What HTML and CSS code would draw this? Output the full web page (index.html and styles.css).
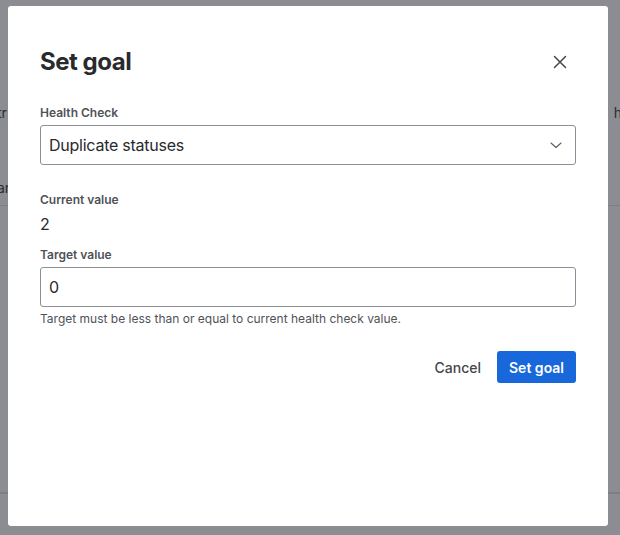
FILE: index.html
```html
<!DOCTYPE html>
<html lang="en">
<head>
<meta charset="utf-8">
<title>Set goal</title>
<link rel="stylesheet" href="styles.css">
</head>
<body>
<div class="bg-page">
  <div class="bg-row bg-row-first">
    <span class="bg-text bg-left">tr</span>
    <span class="bg-text bg-right">h</span>
  </div>
  <div class="bg-row bg-row-head">
    <span class="bg-text bg-left">ar</span>
  </div>
  <div class="bg-body"></div>
</div>
<div class="overlay">
  <section class="modal" role="dialog" aria-labelledby="modal-title">
    <header class="modal-header">
      <h1 id="modal-title" class="modal-title">Set goal</h1>
      <button class="close-btn" aria-label="Close">
        <svg width="14" height="14" viewBox="0 0 14 14" aria-hidden="true">
          <path d="M1.5 1.5 L12.5 12.5 M12.5 1.5 L1.5 12.5" stroke="#44464c" stroke-width="1.5" stroke-linecap="round" fill="none"/>
        </svg>
      </button>
    </header>
    <div class="field field-first">
      <label class="field-label">Health Check</label>
      <div class="select">
        <span class="select-value">Duplicate statuses</span>
        <svg class="chevron" width="12" height="8" viewBox="0 0 12 8" aria-hidden="true">
          <path d="M1 2 L6 6.5 L11 2" stroke="#5b5e66" stroke-width="1.1" fill="none" stroke-linecap="round" stroke-linejoin="round"/>
        </svg>
      </div>
    </div>
    <div class="field field-current">
      <span class="field-label">Current value</span>
      <span class="current-value">2</span>
    </div>
    <div class="field field-target">
      <label class="field-label">Target value</label>
      <div class="input"><span class="input-value">0</span></div>
      <span class="helper">Target must be less than or equal to current health check value.</span>
    </div>
    <footer class="modal-footer">
      <button class="btn btn-subtle">Cancel</button>
      <button class="btn btn-primary">Set goal</button>
    </footer>
  </section>
</div>
</body>
</html>
```
FILE: styles.css
```css
* { box-sizing: border-box; }
html, body {
  margin: 0;
  padding: 0;
  width: 620px;
  height: 535px;
  overflow: hidden;
}
body {
  font-family: "Inter", "Liberation Sans", sans-serif;
  color: #292a2e;
  background: #8b8d92;
}

/* background page, dimmed by the overlay */
.bg-page {
  display: flex;
  flex-direction: column;
  height: 535px;
  background: #8b8d92;
  color: #2b2c30;
}
.bg-row {
  display: flex;
  justify-content: space-between;
  font-size: 14px;
  line-height: 16px;
}
.bg-row-first { margin-top: 105px; }
.bg-row-head {
  margin-top: 48px;
  height: 37px;
  padding-top: 11px;
  border-bottom: 1px solid #7c7e83;
}
.bg-left { margin-left: -3px; }
.bg-right { margin-right: -2px; }
.bg-body {
  height: 288px;
  border-bottom: 2px solid #7c7e83;
}

/* overlay + modal */
.overlay {
  position: fixed;
  inset: 0;
  padding: 6px 12px 9px 8px;
  display: flex;
}
.modal {
  width: 600px;
  height: 520px;
  background: #ffffff;
  border-radius: 3px;
  padding: 32px 32px;
  display: flex;
  flex-direction: column;
}
.modal-header {
  display: flex;
  align-items: center;
  justify-content: space-between;
  height: 48px;
}
.modal-title {
  margin: 0;
  font-size: 24px;
  line-height: 28px;
  font-weight: 700;
  letter-spacing: -0.02em;
  color: #292a2e;
}
.close-btn {
  width: 32px;
  height: 32px;
  border: 0;
  background: transparent;
  padding: 0;
  display: flex;
  align-items: center;
  justify-content: center;
}

.field { display: flex; flex-direction: column; }
.field-first { margin-top: 19px; }
.field-current { margin-top: 27px; }
.field-target { margin-top: 11px; }
.field-label {
  font-size: 12px;
  line-height: 16px;
  font-weight: 600;
  color: #505258;
  margin-bottom: 4px;
}

.select, .input {
  height: 40px;
  border: 1px solid #8c8f97;
  border-radius: 3px;
  display: flex;
  align-items: center;
  padding: 0 12px 0 8px;
  font-size: 16px;
  letter-spacing: -0.015em;
  color: #292a2e;
}
.select { justify-content: space-between; }
.chevron { margin-right: 1px; }

.current-value {
  font-size: 16px;
  line-height: 24px;
}

.helper {
  margin-top: 4px;
  font-size: 12px;
  line-height: 16px;
  color: #505258;
}

.modal-footer {
  margin-top: 24px;
  display: flex;
  justify-content: flex-end;
  gap: 4px;
}
.btn {
  height: 32px;
  padding: 0 12px;
  border: 0;
  border-radius: 3px;
  font-family: inherit;
  font-size: 14px;
  font-weight: 500;
}
.btn-subtle {
  background: transparent;
  color: #44464c;
}
.btn-primary {
  background: #1868db;
  color: #ffffff;
  font-weight: 600;
}
```
